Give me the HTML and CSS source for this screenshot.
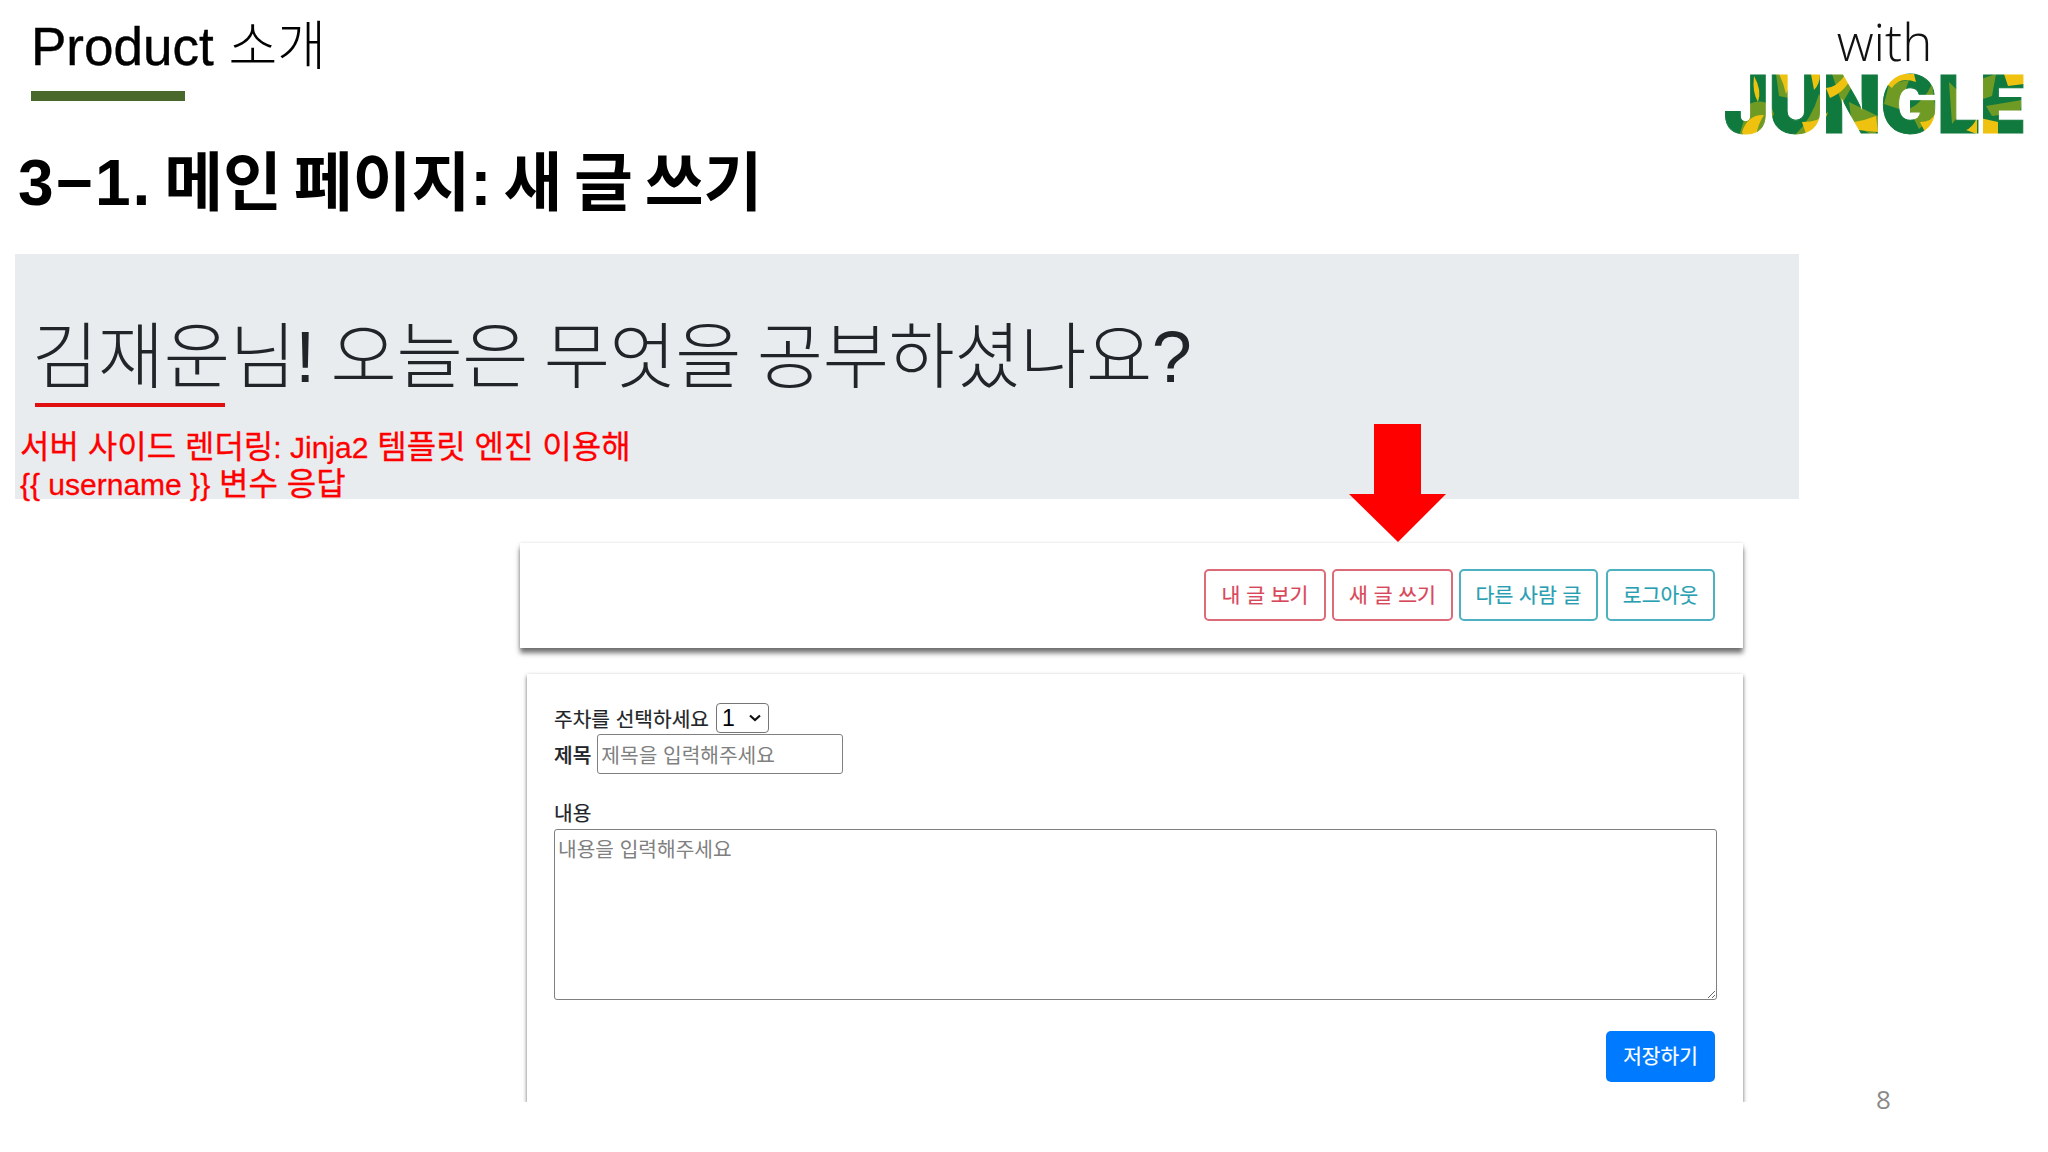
FILE: index.html
```html
<!DOCTYPE html>
<html lang="ko">
<head>
    <meta charset="UTF-8">
    <title>Product 소개</title>
    <link rel="stylesheet" href="styles.css">
</head>
<body>
    <div class="slide">
        <header class="slide-head">
            <div class="section">
                <div class="section-name">Product <span class="section-light">소개</span></div>
                <div class="section-bar"></div>
            </div>
            <div class="brand">
                <div class="brand-with">with</div>
                <svg class="brand-logo" width="302" height="98" viewBox="0 0 302 98">
                    <defs>
                        <pattern id="camo" patternUnits="userSpaceOnUse" x="0" y="18" width="302" height="62">
                            <rect width="302" height="62" fill="#10793d"/>
                            <g fill="#6f9a24">
                                <path d="M25 30 Q45 22 50 40 L40 62 L15 62 Z"/>
                                <path d="M52 0 L75 0 L70 25 L55 22 Z"/>
                                <path d="M95 20 Q105 35 90 60 L70 62 Q88 45 95 20 Z"/>
                                <path d="M108 0 L135 0 L118 30 Z"/>
                                <path d="M125 28 L160 45 L150 62 L128 50 Z"/>
                                <path d="M165 10 L185 6 L175 35 L160 30 Z"/>
                                <path d="M185 35 Q200 28 208 10 L212 40 L195 55 Z"/>
                                <path d="M225 8 L245 28 L228 50 Z"/>
                                <path d="M248 8 L272 0 L268 22 L250 28 Z"/>
                                <path d="M262 32 L298 26 L296 38 L268 42 Z"/>
                            </g>
                            <g fill="#eec20f">
                                <path d="M30 2 Q38 16 34 28 Q28 18 30 2 Z"/>
                                <path d="M55 0 L65 0 Q68 10 62 20 Q60 10 55 0 Z"/>
                                <path d="M18 58 Q24 40 40 41 Q34 50 32 62 L20 62 Z"/>
                                <path d="M87 0 L96 0 Q96 10 90 16 Z"/>
                                <path d="M78 48 Q96 48 104 38 Q98 56 82 60 Z"/>
                                <path d="M102 14 Q112 14 122 0 L128 0 Q124 16 106 24 Z"/>
                                <path d="M130 48 Q142 46 152 42 L154 58 L134 56 Z"/>
                                <path d="M160 8 Q164 0 172 0 L190 0 L192 8 Q176 2 168 14 Z"/>
                                <path d="M196 48 Q208 48 212 38 L214 58 L202 60 Z"/>
                                <path d="M242 56 Q248 54 253 44 L253 60 Z"/>
                                <path d="M256 44 L274 48 L274 62 L256 62 Z"/>
                                <path d="M280 0 L302 0 L300 10 L284 12 Z"/>
                            </g>
                        </pattern>
                    </defs>
                    <text class="brand-text" x="0" y="77" textLength="302" lengthAdjust="spacingAndGlyphs" fill="url(#camo)" stroke="url(#camo)" stroke-width="1">JUNGLE</text>
                </svg>
            </div>
        </header>

        <h1 class="slide-title"><span class="title-num">3−1.</span> 메인 페이지: 새 글 쓰기</h1>

        <section class="hero">
            <h2 class="hero-text">김재운님! 오늘은 무엇을 공부하셨나요?</h2>
            <div class="hero-mark"></div>
            <p class="note">서버 사이드 렌더링<span class="note-latin">: Jinja2</span> 템플릿 엔진 이용해<br><span class="note-latin">{{ username }}</span> 변수 응답</p>
        </section>

        <svg class="arrow" width="97" height="118" viewBox="0 0 97 118">
            <path d="M25 0 H72 V70 H97 L49 118 L0 70 H25 Z" fill="#ff0000"/>
        </svg>

        <div class="shots">
            <nav class="nav-card">
                <button class="btn btn-red btn-first">내 글 보기</button>
                <button class="btn btn-red btn-write">새 글 쓰기</button>
                <button class="btn btn-teal btn-others">다른 사람 글</button>
                <button class="btn btn-teal btn-logout">로그아웃</button>
            </nav>
            <form class="form-card">
                <div class="row row-week">
                    <label class="label">주차를 선택하세요</label>
                    <select class="week">
                        <option>1</option>
                    </select>
                </div>
                <div class="row row-title">
                    <label class="label label-bold">제목</label>
                    <input class="title-input" type="text" placeholder="제목을 입력해주세요">
                </div>
                <label class="label label-block">내용</label>
                <textarea class="content" placeholder="내용을 입력해주세요"></textarea>
                <div class="form-foot">
                    <button class="btn-save" type="button">저장하기</button>
                </div>
            </form>
        </div>

        <div class="page-num">8</div>
    </div>
</body>
</html>
```

FILE: styles.css
```css
* {
    margin: 0;
    padding: 0;
    box-sizing: border-box;
}

body {
    background: white;
    font-family: "Liberation Sans", "Noto Sans CJK KR", sans-serif;
    overflow: hidden;
}

.slide {
    width: 2048px;
    height: 1152px;
    position: relative;
    overflow: hidden;
    background: white;
}

/* 상단 */
.slide-head {
    height: 144px;
    display: flex;
    justify-content: space-between;
}

.section {
    padding: 14px 0 0 31px;
}

.section-name {
    font-size: 53px;
    line-height: 66px;
    color: black;
    -webkit-text-stroke: 0.4px black;
}

.section-light {
    font-size: 53px;
    font-weight: 300;
    -webkit-text-stroke: 0;
}

.section-bar {
    width: 154px;
    height: 10px;
    margin-top: 11px;
    background: #48682c;
}

.brand {
    width: 323px;
    padding-top: 8px;
    display: flex;
    flex-direction: column;
    align-items: center;
}

.brand-with {
    font-family: "Open Sans", sans-serif;
    font-weight: 300;
    font-size: 51px;
    line-height: 66px;
    color: #111;
    margin-right: 4px;
    margin-bottom: -18px;
}

.brand-logo {
    display: block;
    margin-right: 23px;
    margin-bottom: -18px;
    overflow: visible;
}

.brand-text {
    font-family: Inter, sans-serif;
    font-weight: 900;
    font-size: 80px;
}

.slide-title {
    height: 110px;
    padding: 3px 0 0 18px;
    font-size: 64px;
    line-height: 72px;
    font-weight: bold;
    word-spacing: -6px;
    color: black;
}

.title-num {
    letter-spacing: 2px;
}

/* 회색 배너 */
.hero {
    width: 1784px;
    height: 245px;
    margin-left: 15px;
    padding: 58px 0 0 5px;
    background: #e9ecef;
    position: relative;
}

.hero-text {
    margin-left: 12px;
    font-size: 72px;
    line-height: 90px;
    font-weight: 300;
    letter-spacing: -0.4px;
    word-spacing: -4px;
    color: #212529;
}

.hero-mark {
    width: 190px;
    height: 4px;
    margin: 1px 0 0 15px;
    background: #e01010;
}

.note {
    margin-top: 22px;
    font-size: 32px;
    line-height: 37px;
    color: #ff0000;
    -webkit-text-stroke: 0.3px #ff0000;
}

.note-latin {
    font-size: 30px;
}

.arrow {
    position: absolute;
    left: 1349px;
    top: 424px;
}

/* 스크린샷 영역 */
.shots {
    width: 1223px;
    margin: 44px 0 0 520px;
}

.nav-card {
    height: 105px;
    display: flex;
    justify-content: flex-end;
    align-items: center;
    padding: 0 28px 2px 0;
    background: white;
    box-shadow: 0 5px 5px rgba(0, 0, 0, 0.55), 0 0 3px rgba(0, 0, 0, 0.12);
}

.btn {
    height: 52px;
    padding-bottom: 2px;
    background: white;
    border: 2px solid;
    border-radius: 5px;
    font-family: "Noto Sans CJK KR", sans-serif;
    font-size: 20.5px;
    -webkit-text-stroke: 0.2px;
}

.btn-red {
    border-color: #dc6a78;
    color: #d8485a;
}

.btn-teal {
    border-color: #4db1c1;
    color: #2a9fb2;
}

.btn-first {
    width: 122px;
}

.btn-write {
    width: 121px;
    margin-left: 6px;
}

.btn-others {
    width: 139px;
    margin-left: 6px;
}

.btn-logout {
    width: 109px;
    margin-left: 8px;
}

.form-card {
    width: 1216px;
    height: 428px;
    margin: 26px 0 0 7px;
    padding: 28px 26px 0 27px;
    background: white;
    box-shadow: 0 2px 4px rgba(0, 0, 0, 0.6);
    clip-path: inset(-3px -8px 0 -8px);
    font-family: "Noto Sans CJK KR", sans-serif;
    font-size: 20.3px;
    color: #212529;
}

.row {
    display: flex;
    align-items: center;
}

.row-week {
    height: 31px;
    gap: 7px;
}

.row-title {
    height: 41px;
    gap: 7px;
}

.label {
    line-height: 30px;
    -webkit-text-stroke: 0.2px #212529;
}

.label-bold {
    font-weight: 500;
}

.label-block {
    display: block;
    margin-top: 23px;
}

.week {
    appearance: none;
    width: 53px;
    height: 30px;
    padding-left: 5px;
    font-family: "Liberation Sans", sans-serif;
    font-size: 23px;
    color: black;
    background: white url("data:image/svg+xml,%3Csvg xmlns='http://www.w3.org/2000/svg' width='12' height='8'%3E%3Cpath d='M1 1.5 L6 6 L11 1.5' fill='none' stroke='%23111' stroke-width='2.2'/%3E%3C/svg%3E") no-repeat right 7px center;
    border: 1.5px solid #767676;
    border-radius: 4px;
}

.title-input {
    width: 246px;
    height: 40px;
    margin-left: -1px;
    padding: 0 3px;
    font-family: "Noto Sans CJK KR", sans-serif;
    font-size: 20.3px;
    border: 1.5px solid #808080;
    border-radius: 3px;
}

.title-input::placeholder,
.content::placeholder {
    color: #808080;
}

.content {
    display: block;
    width: 1163px;
    height: 171px;
    margin-top: 2px;
    padding: 3px;
    font-family: "Noto Sans CJK KR", sans-serif;
    font-size: 20.3px;
    line-height: 30px;
    border: 1.5px solid #808080;
    border-radius: 3px;
}

.form-foot {
    display: flex;
    justify-content: flex-end;
    margin-top: 31px;
    padding-right: 2px;
}

.btn-save {
    width: 109px;
    height: 51px;
    padding-bottom: 3px;
    background: #007bff;
    border: none;
    border-radius: 5px;
    color: white;
    font-family: "Noto Sans CJK KR", sans-serif;
    font-size: 20.3px;
    -webkit-text-stroke: 0.2px white;
}

.page-num {
    position: absolute;
    left: 1876px;
    top: 1084px;
    font-family: "Open Sans", sans-serif;
    font-size: 26px;
    line-height: 30px;
    color: #8a8a8a;
}
```
